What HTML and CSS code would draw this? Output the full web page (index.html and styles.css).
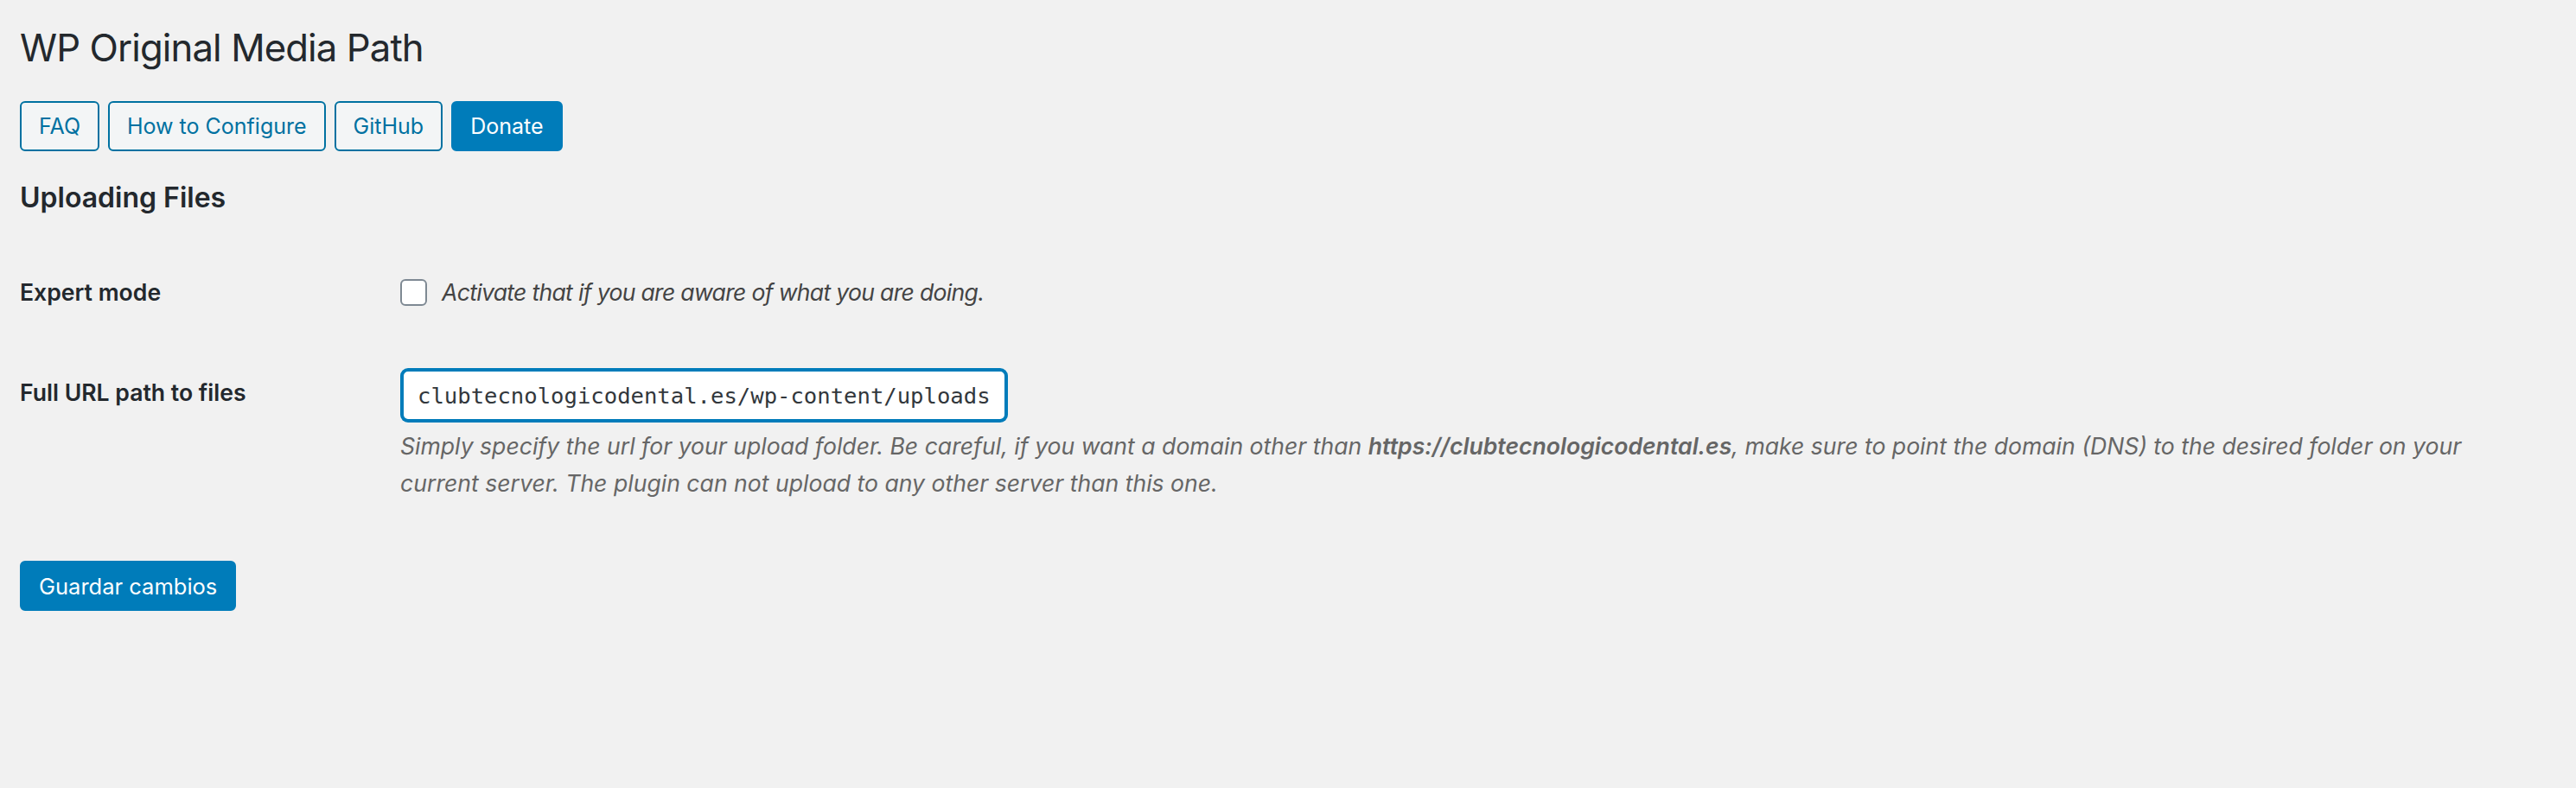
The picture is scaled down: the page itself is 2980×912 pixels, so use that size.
FILE: index.html
```html
<!DOCTYPE html>
<html lang="en">
<head>
<meta charset="utf-8">
<title>WP Original Media Path</title>
<link rel="stylesheet" href="styles.css">
</head>
<body>
<div class="wrap">
  <h1 class="page-title">WP Original Media Path</h1>
  <div class="btn-row">
    <a class="button">FAQ</a>
    <a class="button">How to Configure</a>
    <a class="button">GitHub</a>
    <a class="button button-primary">Donate</a>
  </div>
  <h2 class="section-title">Uploading Files</h2>
  <div class="form-table">
    <div class="row row-check">
      <div class="th">Expert mode</div>
      <div class="td">
        <label class="check-label"><input type="checkbox" class="checkbox"><span class="check-text">Activate that if you are aware of what you are doing.</span></label>
      </div>
    </div>
    <div class="row row-url">
      <div class="th th-url">Full URL path to files</div>
      <div class="td">
        <div class="text-input">clubtecnologicodental.es/wp-content/uploads</div>
        <p class="description">Simply specify the url for your upload folder. Be careful, if you want a domain other than <strong>https://clubtecnologicodental.es</strong>, make sure to point the domain (DNS) to the desired folder on your current server. The plugin can not upload to any other server than this one.</p>
      </div>
    </div>
  </div>
  <div class="submit">
    <button class="button button-primary button-save">Guardar cambios</button>
  </div>
</div>
</body>
</html>
```

FILE: styles.css
```css
html, body {
  margin: 0;
  padding: 0;
  background: #f1f1f1;
}
body {
  font-family: Inter, "Liberation Sans", Arial, sans-serif;
  color: #444;
}
.wrap {
  padding: 0 55px 0 23px;
}
.page-title {
  margin: 0;
  padding-top: 27px;
  font-size: 43.7px;
  line-height: 57px;
  font-weight: 400;
  letter-spacing: -0.9px;
  color: #23282d;
}
.btn-row {
  display: flex;
  gap: 10px;
  margin-top: 33px;
}
.button {
  box-sizing: border-box;
  display: inline-flex;
  align-items: center;
  height: 58px;
  padding: 0 20px;
  border: 2px solid #0071a1;
  border-radius: 6px;
  background: #f3f5f6;
  color: #0071a1;
  font-family: Inter, "Liberation Sans", Arial, sans-serif;
  font-size: 25px;
  font-weight: 400;
  text-decoration: none;
  cursor: pointer;
}
.button-primary {
  background: #007cba;
  border-color: #007cba;
  color: #fff;
}
.button-save {
  font-size: 25.5px;
}
.section-title {
  margin: 33px 0 0;
  font-size: 32px;
  line-height: 42px;
  font-weight: 600;
  color: #23282d;
}
.form-table {
  margin-top: 68px;
}
.row {
  display: grid;
  grid-template-columns: 440px 1fr;
}
.th {
  font-size: 26.6px;
  line-height: 40px;
  font-weight: 600;
  color: #23282d;
}
.row-check {
  align-items: center;
  height: 40px;
}
.check-label {
  display: flex;
  align-items: center;
  gap: 17px;
}
.checkbox {
  appearance: none;
  -webkit-appearance: none;
  box-sizing: border-box;
  width: 31px;
  height: 31px;
  margin: 0;
  border: 2px solid #7e8993;
  border-radius: 6px;
  background: #fff;
}
.check-text {
  font-size: 26.6px;
  line-height: 40px;
  font-style: italic;
  letter-spacing: -0.7px;
  color: #444;
}
.row-url {
  margin-top: 68px;
  align-items: start;
}
.th-url {
  padding-top: 8px;
}
.text-input {
  box-sizing: border-box;
  display: inline-flex;
  align-items: center;
  height: 59px;
  margin: 2px 0 0 2px;
  padding: 0 16px;
  border: 2px solid #007cba;
  border-radius: 7px;
  box-shadow: 0 0 0 2px #007cba;
  background: #fff;
  color: #32373c;
  font-family: "DejaVu Sans Mono", "Liberation Mono", monospace;
  font-size: 25.6px;
}
.description {
  margin: 8px 0 0;
  font-size: 26.6px;
  line-height: 43px;
  font-style: italic;
  color: #666;
}
.description strong {
  font-weight: 600;
}
.submit {
  margin-top: 68px;
}
```
